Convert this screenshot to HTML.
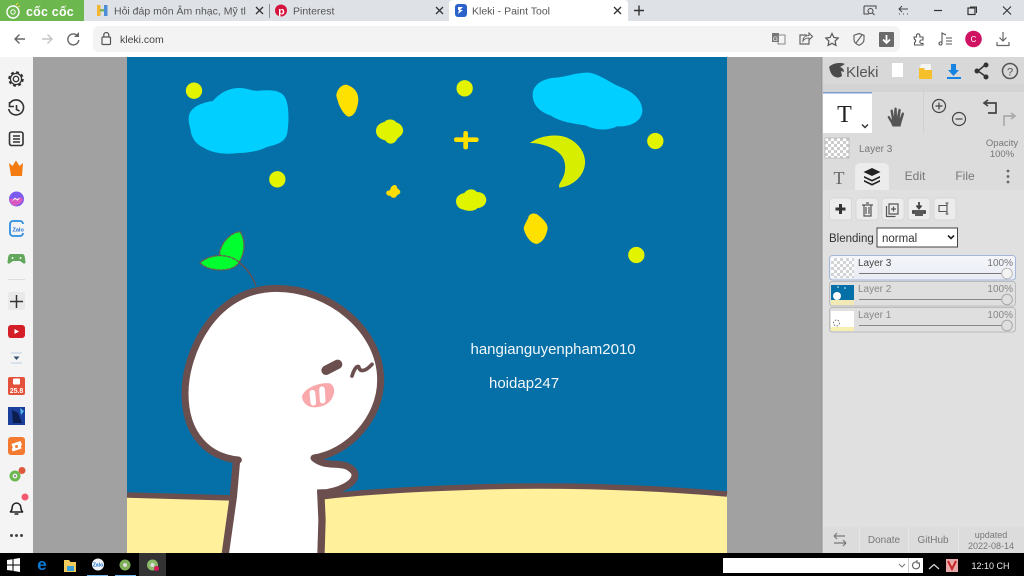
<!DOCTYPE html>
<html lang="vi"><head><meta charset="utf-8"><title>Kleki - Paint Tool</title>
<style>
html,body{margin:0;padding:0;width:1024px;height:576px;overflow:hidden;background:#000}
svg{display:block;position:absolute;left:0;top:0;filter:blur(.3px)}
text{font-family:"Liberation Sans","Noto Sans CJK SC",sans-serif}
</style></head><body>
<svg width="1024" height="576" viewBox="0 0 1024 576" xmlns="http://www.w3.org/2000/svg">
<defs>
<pattern id="chk" width="6" height="6" patternUnits="userSpaceOnUse"><rect width="6" height="6" fill="#fff"/><rect width="3" height="3" fill="#ccc"/><rect x="3" y="3" width="3" height="3" fill="#ccc"/></pattern>
<linearGradient id="lay" x1="0" y1="0" x2="0" y2="1"><stop offset="0" stop-color="#f4f6fb"/><stop offset="1" stop-color="#e8ebf2"/></linearGradient>
</defs>
<!-- tab bar -->
<rect width="1024" height="21" fill="#dee1e6"/>
<rect width="84" height="21" fill="#6cb84f"/>
<circle cx="13" cy="12" r="6" fill="none" stroke="#fff" stroke-width="1.4"/><circle cx="13" cy="12" r="2.2" fill="none" stroke="#fff"/><path d="M16 5l2-2M18 7l2-1" stroke="#f5d34a" stroke-width="1.2"/>
<text x="26" y="16" font-size="12.500" font-weight="bold" fill="#fff" letter-spacing=".2">cốc cốc</text>
<path d="M97 5h3.500v6H97z" fill="#f2b632"/><path d="M97 11h3.500v5H97z" fill="#f2b632"/><path d="M104 5h3.500v11H104z" fill="#4c8fd8"/><rect x="100" y="9" width="4" height="2.500" fill="#7cb65a"/>
<text x="114" y="14.500" font-size="10.500" fill="#555">Hỏi đáp môn Âm nhạc, Mỹ tl</text>
<path d="M256 7l7 7M263 7l-7 7" stroke="#333" stroke-width="1.300"/>
<rect x="269" y="4" width="1" height="14" fill="#8a8d91"/>
<circle cx="281" cy="10.500" r="6" fill="#d4143c"/><text x="278.200" y="14.500" font-size="10.500" font-weight="bold" fill="#fff">p</text>
<text x="293" y="14.500" font-size="10.500" fill="#555">Pinterest</text>
<path d="M436 7l7 7M443 7l-7 7" stroke="#333" stroke-width="1.300"/>
<path d="M449 21V4q0-4 4-4h171q4 0 4 4v17z" fill="#fff"/>
<rect x="455" y="4" width="12" height="13" rx="3" fill="#2a62c9"/><path d="M458 7h5l-3 3h3l-5 4 1-4h-1z" fill="#fff"/>
<text x="472" y="14.500" font-size="10.500" fill="#555">Kleki - Paint Tool</text>
<path d="M614 7l7 7M621 7l-7 7" stroke="#333" stroke-width="1.300"/>
<path d="M634 10.500h10M639 5.500v10" stroke="#333" stroke-width="1.400"/>
<!-- window controls -->
<path d="M864 6h12v3M864 6v8h5" fill="none" stroke="#444" stroke-width="1"/><circle cx="870.500" cy="11" r="2.500" fill="none" stroke="#444"/><path d="M872.500 13l2 2" stroke="#444"/>
<path d="M902 6l-3 3 3 3M899 9h9M899 14h1M903 14h1M907 14h1" fill="none" stroke="#444"/>
<path d="M934 10.500h8" stroke="#333" stroke-width="1.200"/>
<rect x="968" y="8" width="7" height="6.500" fill="none" stroke="#333" stroke-width="1.200"/><path d="M970 7h6.500v6" fill="none" stroke="#333"/>
<path d="M1003 6.500l8 8M1011 6.500l-8 8" stroke="#333" stroke-width="1.100"/>
<!-- toolbar -->
<rect y="21" width="1024" height="36" fill="#fff"/>
<rect x="93" y="26" width="807" height="26" rx="6" fill="#f3f3f4"/>
<path d="M25 39H15M19.500 34.500L15 39l4.500 4.500" fill="none" stroke="#666" stroke-width="1.400"/>
<path d="M42 39h10M47.500 34.500L52 39l-4.500 4.500" fill="none" stroke="#c4c4c4" stroke-width="1.400"/>
<path d="M78 36.500a5.500 5.500 0 1 0 .8 3.500" fill="none" stroke="#666" stroke-width="1.400"/><path d="M79 32v5h-5z" fill="#666"/>
<rect x="102" y="37" width="8.500" height="7.500" rx="1" fill="none" stroke="#555" stroke-width="1.200"/><path d="M103.800 37v-2a2.500 2.500 0 0 1 5 0v2" fill="none" stroke="#555" stroke-width="1.200"/>
<text x="120" y="43" font-size="10.500" fill="#444">kleki.com</text>
<rect x="772" y="33" width="7" height="9" fill="#777"/><rect x="778" y="35" width="7" height="9" fill="none" stroke="#888"/><text x="773" y="41" font-size="6" fill="#fff">G</text>
<path d="M807 35h-7v9h9v-4" fill="none" stroke="#666" stroke-width="1.200"/><path d="M803 41c0-4 3-5.500 6-5.500V33l3.500 3.500-3.500 3.500v-2c-2.500 0-4.500.5-6 3z" fill="none" stroke="#666" stroke-width="1.100"/>
<path d="M832 33.500l1.900 4 4.300.6-3.100 3 .8 4.300-3.900-2.100-3.900 2.100.8-4.300-3.100-3 4.300-.6z" fill="none" stroke="#555" stroke-width="1.200"/>
<path d="M859 33.500l5 1.800v4c0 3-2.300 5-5 6-2.700-1-5-3-5-6v-4zM856 43l6-8" fill="none" stroke="#666" stroke-width="1.200"/>
<rect x="879" y="32" width="15" height="15" rx="1" fill="#6a6a6a"/><path d="M886.500 35v8M883 39.500l3.500 3.500 3.500-3.500" fill="none" stroke="#fff" stroke-width="1.800"/>
<path d="M914 37h2.500v-1.500a1.700 1.700 0 0 1 3.400 0V37h3.100v3h-1.500a1.700 1.700 0 0 0 0 3.400h1.500V45h-8.500v-2.500a1.700 1.700 0 0 0 0-3.200z" fill="none" stroke="#555" stroke-width="1.100"/>
<path d="M942 43.500V33l4 2M942 43.500a1.500 1.500 0 1 1-1.500-1.500h1.500M946 38h6M946 41h6M946 44h6" fill="none" stroke="#555" stroke-width="1.100"/>
<circle cx="973.500" cy="39" r="8.300" fill="#cf1261"/><text x="973.500" y="42" font-size="8" fill="#fff" text-anchor="middle">C</text>
<path d="M1003 32v9M999.500 37.500l3.500 3.500 3.500-3.500M997 42v3.500h12V42" fill="none" stroke="#666" stroke-width="1.200"/>
<!-- page -->
<rect y="57" width="1024" height="496" fill="#a1a1a1"/>
<!-- sidebar -->
<rect y="57" width="33" height="496" fill="#f4f4f4"/>
<g fill="none" stroke="#333" stroke-width="1.600">
<circle cx="16" cy="79" r="2.700" stroke-width="1.400"/><circle cx="16" cy="79" r="5.600" stroke-width="1.300"/><circle cx="16" cy="79" r="6.900" stroke-width="1.800" stroke-dasharray="3 2.400"/>
<path d="M10 103a7.500 7.500 0 1 1-1.300 6M9.500 102v4.500h4.500M16.500 105v4.500l3 1.500"/>
<rect x="9.500" y="132" width="13.500" height="13.500" rx="2"/><path d="M13 136h7M13 139h7M13 142h7"/>
</g>
<path d="M9 163l3.500 3 3.500-5.500 3.500 5.500 3.500-3-1 13h-11z" fill="#f47a12"/>
<circle cx="16.500" cy="199" r="7.500" fill="#7b5af0"/><path d="M9.500 199a7 7 0 0 0 7 7l-1-.5c4-1 8-3 7-8z" fill="#d85ac0"/><path d="M12 201l3-3.500 2 1.800 3.500-2-3 3.500-2-1.800z" fill="#fff"/>
<rect x="10" y="221" width="13" height="15" rx="3" fill="none" stroke="#2c8ee0" stroke-width="1.800"/><rect x="13" y="224" width="11" height="9" fill="#f4f4f4"/><text x="12.500" y="231.500" font-size="5.500" font-weight="bold" fill="#1f6fd0">Zalo</text>
<path d="M11 254h11q2.500 0 2.800 3l.7 5q0 2-2 1.500L20 261h-7l-3.500 2.500q-2 .5-2-1.500l.7-5q.3-3 2.800-3z" fill="#62a85c"/>
<circle cx="12.500" cy="258" r="1" fill="#f4f4f4"/><circle cx="20.500" cy="258" r="1" fill="#f4f4f4"/>
<rect x="8" y="279" width="17" height="1" fill="#ddd"/>
<rect x="8" y="292" width="17" height="18" rx="2" fill="#e9e9e9"/>
<path d="M16.500 295v13M10 301.500h13" stroke="#333" stroke-width="1.500"/>
<rect x="8" y="325" width="17" height="13" rx="3" fill="#d41f28"/><path d="M14.500 329l4.500 2.500-4.500 2.500z" fill="#fff"/>
<path d="M11 353h11M11 363h11" stroke="#bcd0e4"/><path d="M13.500 356.500h6l-3 3.500z" fill="#33506e"/>
<rect x="8" y="377" width="17" height="18" rx="2" fill="#e4513a"/><rect x="13" y="378.500" width="7" height="6" rx="1" fill="#fff"/><text x="16.500" y="393" font-size="7" font-weight="bold" fill="#fff" text-anchor="middle">25.8</text>
<rect x="8" y="407" width="17" height="18" fill="#1d3f9c"/><path d="M12 410l6 3 4 10h-9z" fill="#0c1e50"/><path d="M20 408l4 3-3 4z" fill="#55b7ea"/>
<rect x="8" y="437" width="17" height="18" rx="3" fill="#f47a30"/><path d="M11.500 444l9-3 1.500 4-1.200 1 .8 2.500-9 3-.8-2.800 1-1z" fill="#fff"/><circle cx="16.500" cy="446.500" r="1.500" fill="#f47a30"/>
<circle cx="15" cy="476" r="5.500" fill="#6cb84f"/><circle cx="15" cy="476" r="2.400" fill="#eee"/><circle cx="15" cy="476" r="1" fill="#777"/><circle cx="22" cy="470.500" r="3.500" fill="#dc5a3c"/>
<path d="M10 512c2-1 2-3 2.300-5.500a4.300 4.300 0 0 1 8.400 0c.3 2.500.3 4.500 2.300 5.500zM14.500 514h4" fill="none" stroke="#222" stroke-width="1.500"/><circle cx="25" cy="497" r="3.500" fill="#f25a70"/>
<circle cx="11.500" cy="535.500" r="1.500" fill="#444"/><circle cx="16.500" cy="535.500" r="1.500" fill="#444"/><circle cx="21.500" cy="535.500" r="1.500" fill="#444"/>
<!-- canvas -->
<rect x="127" y="57" width="600" height="496" fill="#0470a7"/>
<g transform="translate(127,57) scale(.33333)">
<circle cx="201" cy="101" r="24.500" fill="#e3f400"/>
<path d="M185 185C185 155 215 138 258 132C278 108 305 93 338 93C360 93 375 103 395 101C430 98 465 98 476 125C487 150 486 200 480 232C472 258 445 263 420 270C395 282 365 288 335 288C305 292 260 292 230 272C205 262 192 240 190 215C187 205 185 195 185 185Z" fill="#00cfff"/>
<path d="M628 118C628 100 642 83 658 83C680 90 695 105 694 130C692 150 685 178 665 179C650 175 635 145 632 130Z" fill="#ffe100"/>
<path d="M747 222C747 205 762 197 772 195C780 185 800 185 808 196C822 200 830 212 828 225C825 238 812 240 808 250C800 263 782 263 775 250C760 247 747 238 747 222Z" fill="#e0f400"/>
<circle cx="451" cy="367" r="24.500" fill="#e3f400"/>
<path d="M790 398C790 385 808 378 810 390C810 396 820 398 820 405C820 412 811 412 808 418C805 425 792 423 790 416C782 418 776 411 778 405C781 400 786 402 790 398Z" fill="#ffdd00"/>
<g transform="translate(900,0)">
<circle cx="113" cy="94" r="24.500" fill="#e3f400"/>
<path d="M317 115C316 85 345 65 385 62C420 60 450 45 485 47C515 50 545 75 580 90C620 105 648 130 646 165C640 200 600 210 570 208C545 220 510 222 475 205C440 200 400 195 370 175C340 165 318 145 317 115Z" fill="#00cfff"/>
<path d="M87 241h22v-12q0-7 7-7t7 7v12h25q7 0 7 7t-7 7h-25v16q0 6-7 6t-7-6v-16H88q-7 0-7-7t6-7Z" fill="#ffe100"/>
<path d="M312 257C340 238 385 230 420 243C455 258 475 290 473 320C470 355 440 385 398 391C395 385 400 378 405 370C420 345 420 310 400 290C380 270 345 258 312 257Z" fill="#d8ee00" stroke="#e8f400" stroke-width="2"/>
<circle cx="685" cy="252" r="24.500" fill="#e3f400"/>
<path d="M87 432C87 418 100 410 112 408C120 395 140 393 150 405C170 405 178 418 178 430C176 445 165 452 152 453C140 465 120 462 110 458C95 456 87 445 87 432Z" fill="#e0f400"/>
<path d="M290 515C292 500 302 490 305 478C312 465 330 468 338 478C350 488 362 500 362 515C358 535 350 555 330 561C310 560 295 535 290 515Z" fill="#ffe100"/>
<circle cx="628" cy="594" r="24.500" fill="#e3f400"/>
</g>
</g>
<!-- ground -->
<path d="M127 497L235 499L235 553H127Z" fill="#fff09c"/>
<path d="M320 498C380 490 470 486 540 486C610 486 680 490 727 495V553H320Z" fill="#fff09c"/>
<path d="M127 495L235 498M320 497C380 490 470 486 540 486C610 486 680 490 727 494" fill="none" stroke="#6b4f4f" stroke-width="5.500"/>
<!-- character -->
<g transform="translate(170,220) scale(.33333)">
<path d="M205 720C120 712 45 650 45 520C45 400 130 205 320 205C480 205 632 330 632 480C632 600 530 700 432 714C460 740 505 728 530 738C545 745 555 755 555 765C555 790 510 815 452 820L455 1000H165L190 830Z" fill="#fff"/>
<path d="M205 720C120 712 45 650 45 520C45 400 130 205 320 205C480 205 632 330 632 480C632 600 530 700 432 714C460 740 505 728 530 738C545 745 555 755 555 765C555 790 510 815 452 820" fill="none" stroke="#6b4f4f" stroke-width="21" stroke-linejoin="round" stroke-linecap="round"/>
<path d="M200 716L190 830L166 1000M452 808L456 900L453 1000" fill="none" stroke="#6b4f4f" stroke-width="22"/>
<path d="M148 103C152 70 180 38 210 35C225 55 228 95 207 127C185 120 160 115 148 103Z" fill="#00ff2e" stroke="#6b5a50" stroke-width="4" stroke-dasharray="12 2"/>
<path d="M207 127C185 105 130 95 90 128C110 155 190 160 207 127Z" fill="#00ff2e" stroke="#6b5a50" stroke-width="4" stroke-dasharray="12 2"/>
<path d="M207 127C230 145 248 170 258 198" fill="none" stroke="#6b4f4f" stroke-width="4"/>
<path d="M468 451L503 433" fill="none" stroke="#6b4f4f" stroke-width="28" stroke-linecap="round"/>
<path d="M546 468C550 455 558 436 566 440C570 458 585 455 606 433" fill="none" stroke="#6b4f4f" stroke-width="11" stroke-linecap="round" stroke-linejoin="round"/>
<path d="M396 530C400 505 450 485 480 490C500 500 495 535 470 552C440 570 400 565 396 530Z" fill="#f9a8ab"/>
<path d="M427 518L430 548M456 508L458 542" stroke="#fff" stroke-width="17" stroke-linecap="round"/>
</g>
<text x="470.500" y="354" font-size="15" fill="#f2f7fa">hangianguyenpham2010</text>
<text x="489" y="388" font-size="15" fill="#f2f7fa">hoidap247</text>
<!-- right panel -->
<rect x="822" y="57" width="202" height="496" fill="#dcdcdc"/>
<rect x="821" y="57" width="1.500" height="496" fill="#999"/>
<rect x="823" y="84" width="201" height="8" fill="#d3d3d3"/>
<rect x="823" y="57" width="201" height="27" fill="#d8d8d8"/>
<path d="M829 67c4-4 11-5 16-3l-5 3c3 1 4 3 4 5l-3-1 1 5c-4 3-9 1-11-3s-1-4-2-6z" fill="#4a4a4a"/>
<text x="846" y="77" font-size="15" fill="#555">Kleki</text>
<rect x="892" y="63" width="11" height="14" fill="#fff"/>
<path d="M919 70l2-6h9l1 1v5z" fill="#f5f5f5"/><path d="M919 68h5l1 2h7v9h-13z" fill="#f6c02c"/>
<path d="M951 64h5v6h3l-5.500 6-5.500-6h3z" fill="#1683e0"/><rect x="947" y="77" width="14" height="2" fill="#1683e0"/>
<path d="M985 65l-7 6 7 5" fill="none" stroke="#333" stroke-width="1.500"/><circle cx="986" cy="65" r="2.500" fill="#333"/><circle cx="977" cy="71" r="2.500" fill="#333"/><circle cx="986" cy="77" r="2.500" fill="#333"/>
<circle cx="1010" cy="71" r="7.500" fill="none" stroke="#555" stroke-width="1.500"/><text x="1010" y="75.500" font-size="11" fill="#555" text-anchor="middle">?</text>
<rect x="823" y="92" width="49" height="41" fill="#fff"/><rect x="823" y="92" width="49" height="1.500" fill="#7d9ccc"/>
<text x="844.500" y="122" font-size="24" fill="#222" text-anchor="middle" style='font-family:"Liberation Serif",serif'>T</text>
<path d="M862 124.500l3 3 3-3" fill="none" stroke="#333" stroke-width="1.400"/>
<path d="M891 123l-3-5c-1-2 1-3 2-1l2 3-1.500-9c0-2 2-2 2.500 0l1 6 .3-8c0-2 2.500-2 2.500 0l.2 8 1.300-7c.4-2 2.700-1.500 2.400.5l-1 8 2-5c.7-2 2.700-1 2.200 1l-2.400 8-1 4h-8z" fill="#555"/>
<rect x="923" y="92" width="1" height="41" fill="#d0d0d0"/>
<g fill="none" stroke="#444" stroke-width="1.200"><circle cx="939" cy="106" r="6.500"/><path d="M935.500 106h7M939 102.500v7"/><circle cx="959" cy="119" r="6.500"/><path d="M955.500 119h7"/></g>
<path d="M985 103h11v10h-8M988 100l-4 3 4 3" fill="none" stroke="#444" stroke-width="1.700"/>
<path d="M1014 116h-10v10M1011 113l4 3-4 3" fill="none" stroke="#aaa" stroke-width="1.700"/>
<rect x="825" y="138" width="24" height="20" fill="url(#chk)" stroke="#aaa" stroke-width=".6"/>
<text x="859" y="152" font-size="10" fill="#777">Layer 3</text>
<text x="1002" y="146" font-size="9.500" fill="#777" text-anchor="middle">Opacity</text>
<text x="1002" y="157" font-size="9.500" fill="#777" text-anchor="middle">100%</text>
<path d="M855 190v-21q0-6 6-6h22q6 0 6 6v21z" fill="#ececec"/>
<text x="839" y="184" font-size="18" fill="#666" text-anchor="middle" style='font-family:"Liberation Serif",serif'>T</text>
<path d="M872 168l8.500 4-8.500 4-8.500-4z" fill="#222"/><path d="M864 176l8 3.800 8-3.800v1.800l-8 3.800-8-3.800zM864 180l8 3.800 8-3.800v1.800l-8 3.800-8-3.800z" fill="#222"/>
<text x="915" y="180" font-size="12" fill="#777" text-anchor="middle">Edit</text>
<text x="965" y="180" font-size="12" fill="#777" text-anchor="middle">File</text>
<circle cx="1008" cy="171" r="1.400" fill="#666"/><circle cx="1008" cy="176.500" r="1.400" fill="#666"/><circle cx="1008" cy="182" r="1.400" fill="#666"/>
<rect x="823" y="190" width="201" height="337" fill="#e0e0e0"/>
<g fill="#ececec" stroke="#d2d2d2" stroke-width=".7">
<rect x="829.500" y="198" width="22" height="22" rx="3"/><rect x="856" y="198" width="22" height="22" rx="3"/><rect x="882" y="198" width="22" height="22" rx="3"/><rect x="908" y="198" width="22" height="22" rx="3"/><rect x="934" y="198" width="22" height="22" rx="3"/>
</g>
<path d="M840.500 204v10M835.500 209h10" stroke="#333" stroke-width="3"/>
<path d="M862 205h11M864 205v11h7v-11M866 203h3M866 207v7M869 207v7" fill="none" stroke="#555" stroke-width="1.200"/>
<path d="M889 204h9v10h-9zM886.500 206v10.500h9M893.500 206.500v5M891 209h5" fill="none" stroke="#555" stroke-width="1.200"/>
<path d="M919 202v6M916.500 205.500l2.500 3 2.500-3M913 211h12v2h-12zM915 215h8" fill="none" stroke="#444" stroke-width="1.800"/>
<path d="M939 205.500h8v6h-8zM947 203v11M945.500 203h3M945.500 214h3" fill="none" stroke="#555" stroke-width="1.100"/>
<text x="829" y="242" font-size="11.500" fill="#333">Blending</text>
<rect x="877" y="228" width="80.500" height="19" fill="#fff" stroke="#444"/>
<text x="882" y="242" font-size="11.500" fill="#333">normal</text>
<path d="M948 235.500l3 3 3-3" fill="none" stroke="#222" stroke-width="1.600"/>
<rect x="829.500" y="255.500" width="186" height="24.500" rx="3" fill="url(#lay)" stroke="#a5b7d9"/>
<rect x="831" y="258" width="23" height="20" fill="url(#chk)" opacity=".8"/>
<text x="858" y="266" font-size="10" fill="#444">Layer 3</text>
<text x="1013" y="266" font-size="10" fill="#777" text-anchor="end">100%</text>
<rect x="859" y="273" width="146" height="1" fill="#777"/><circle cx="1007" cy="273.500" r="5.300" fill="#f4f4f4" stroke="#bbb"/>
<rect x="829.500" y="281.500" width="186" height="24.500" rx="3" fill="#dfdfdf" stroke="#bbb"/>
<rect x="831" y="285" width="23" height="20" fill="#0470a7"/><rect x="831" y="300" width="23" height="5" fill="#f2e9b5"/><circle cx="837" cy="296" r="4" fill="#fff"/><circle cx="845" cy="288" r=".8" fill="#dff"/><circle cx="838" cy="287" r=".8" fill="#dff"/>
<text x="858" y="292" font-size="10" fill="#888">Layer 2</text>
<text x="1013" y="292" font-size="10" fill="#888" text-anchor="end">100%</text>
<rect x="859" y="299" width="146" height="1" fill="#888"/><circle cx="1007" cy="299.500" r="5.300" fill="#dfdfdf" stroke="#aaa"/>
<rect x="829.500" y="307.500" width="186" height="24.500" rx="3" fill="#dfdfdf" stroke="#bbb"/>
<rect x="831" y="311" width="23" height="20" fill="#fff"/><rect x="831" y="327" width="23" height="4" fill="#f7efb0"/><circle cx="836.500" cy="323" r="3" fill="none" stroke="#777" stroke-dasharray="1.500 1.500"/>
<text x="858" y="318" font-size="10" fill="#888">Layer 1</text>
<text x="1013" y="318" font-size="10" fill="#888" text-anchor="end">100%</text>
<rect x="859" y="325" width="146" height="1" fill="#888"/><circle cx="1007" cy="325.500" r="5.300" fill="#dfdfdf" stroke="#aaa"/>
<rect x="823" y="527" width="201" height="26" fill="#dcdcdc"/>
<rect x="859" y="527" width="1" height="26" fill="#e6e6e6"/><rect x="908" y="527" width="1" height="26" fill="#e6e6e6"/><rect x="958" y="527" width="1" height="26" fill="#e6e6e6"/>
<path d="M834 536h11M834 536l3-3M834 536l3 3M846 543h-12M846 543l-3-3M846 543l-3 3" fill="none" stroke="#777" stroke-width="1.200"/>
<text x="884" y="543" font-size="10" fill="#777" text-anchor="middle">Donate</text>
<text x="933" y="543" font-size="10" fill="#777" text-anchor="middle">GitHub</text>
<text x="991" y="538" font-size="9" fill="#777" text-anchor="middle">updated</text>
<text x="991" y="549" font-size="9" fill="#777" text-anchor="middle">2022-08-14</text>
<!-- taskbar -->
<rect y="553" width="1024" height="23" fill="#000"/>
<rect x="139" y="553" width="27" height="23" fill="#333"/>
<path d="M7 560l5.500-.8v5.300H7zM13.500 559l6.500-1v6.500h-6.500zM7 565.500h5.500v5.300L7 570zM13.500 565.500H20v6.500l-6.500-1z" fill="#fff"/>
<text x="42" y="570" font-size="17" font-weight="bold" fill="#0a7ad8" text-anchor="middle">e</text>
<path d="M64 560h5l1.500 2h5.500v10H64z" fill="#f2cc5c"/><rect x="67" y="566" width="7" height="5" fill="#3da2d8"/>
<circle cx="98" cy="564.500" r="6" fill="#f0f4fa"/><text x="98" y="566.500" font-size="5" font-weight="bold" fill="#1c6fd0" text-anchor="middle">Zalo</text>
<rect x="87" y="575" width="21" height="1" fill="#76b9ed"/>
<circle cx="125" cy="565" r="5.500" fill="#7dae55"/><circle cx="125" cy="565" r="2" fill="#ddd"/><rect x="115" y="575" width="21" height="1" fill="#76b9ed"/>
<circle cx="152.500" cy="565" r="5.500" fill="#8dba6a"/><circle cx="152.500" cy="565" r="2" fill="#ddd"/><circle cx="156.500" cy="568.500" r="2.500" fill="#d8145c"/>
<rect x="723" y="558" width="200" height="15" fill="#fff"/>
<path d="M899 564l3 3 3-3" fill="none" stroke="#777"/><rect x="908" y="558" width="1" height="15" fill="#ccc"/>
<path d="M919 563.500a3.500 3.500 0 1 1-1.500-1.300M917 560v3h3" fill="none" stroke="#555"/>
<path d="M929 569l5-4.500 5 4.500" fill="none" stroke="#ddd" stroke-width="1.200"/>
<rect x="946" y="559" width="12" height="13" fill="#e8a8a8"/><path d="M948 561l4 8 4-8" fill="none" stroke="#c82828" stroke-width="2"/>
<text x="990.500" y="569" font-size="9" fill="#eee" text-anchor="middle">12:10 CH</text>
</svg>
</body></html>
